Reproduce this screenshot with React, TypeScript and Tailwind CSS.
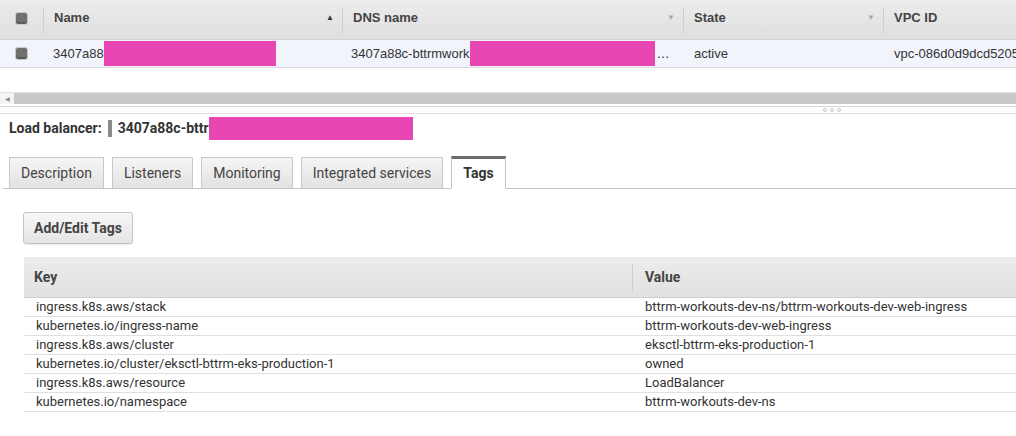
import { FC } from "react";

const tags: [string, string][] = [
  ["ingress.k8s.aws/stack", "bttrm-workouts-dev-ns/bttrm-workouts-dev-web-ingress"],
  ["kubernetes.io/ingress-name", "bttrm-workouts-dev-web-ingress"],
  ["ingress.k8s.aws/cluster", "eksctl-bttrm-eks-production-1"],
  ["kubernetes.io/cluster/eksctl-bttrm-eks-production-1", "owned"],
  ["ingress.k8s.aws/resource", "LoadBalancer"],
  ["kubernetes.io/namespace", "bttrm-workouts-dev-ns"],
];

const tabs = ["Description", "Listeners", "Monitoring", "Integrated services", "Tags"];

const Checkbox: FC = () => (
  <div className="w-[13px] h-[13px] rounded-[3px] bg-[#707070] border border-[#c8c8c8] shadow-[inset_0_-2px_0_#5a5a5a]" />
);

const HeadCell: FC<{ label: string; width: string; arrow?: "up" | "down" }> = ({ label, width, arrow }) => (
  <div className={`${width} h-full flex items-center shrink-0`}>
    <div className="w-px h-[26px] bg-[#cfcfcf]" />
    <span className="pl-[10px] pb-[3px] font-bold text-[13px] text-[#444]">{label}</span>
    <div className="flex-1" />
    {arrow === "up" && <span className="text-[8px] text-[#333] pr-[8px] pb-[3px]">▲</span>}
    {arrow === "down" && <span className="text-[8px] text-[#aaa] pr-[8px] pb-[3px]">▼</span>}
  </div>
);

const App: FC = () => {
  return (
    <div className="w-[1016px] h-[436px] bg-white overflow-hidden" style={{ fontFamily: "Roboto, 'Liberation Sans', sans-serif" }}>
      {/* Load balancer list */}
      <div className="font-['Liberation_Sans',Arial,sans-serif]">
        <div className="h-[40px] flex items-center bg-gradient-to-b from-[#ececec] to-[#dfdfdf] border-b border-[#d4d4d4]">
          <div className="w-[43px] shrink-0 flex justify-center pb-[3px]">
            <Checkbox />
          </div>
          <HeadCell label="Name" width="w-[299px]" arrow="up" />
          <HeadCell label="DNS name" width="w-[341px]" arrow="down" />
          <HeadCell label="State" width="w-[200px]" arrow="down" />
          <HeadCell label="VPC ID" width="w-[133px]" />
        </div>
        <div className="h-[28px] flex items-center bg-[#f1f4fb] border-b border-[#d8dbe2] text-[13px] text-[#333] whitespace-nowrap">
          <div className="w-[43px] shrink-0 flex justify-center">
            <Checkbox />
          </div>
          <div className="w-[299px] shrink-0 flex items-center pl-[10px]">
            <span>3407a88</span>
            <div className="w-[172px] h-[25px] bg-[#e846b3]" />
          </div>
          <div className="w-[341px] shrink-0 flex items-center pl-[9px]">
            <span>3407a88c-bttrmwork</span>
            <div className="w-[185px] h-[25px] bg-[#e846b3]" />
            <span className="pl-[2px]">…</span>
          </div>
          <div className="w-[200px] shrink-0 pl-[11px]">active</div>
          <div className="flex-1 pl-[11px]">vpc-086d0d9dcd5205</div>
        </div>
      </div>

      {/* Scrollbar */}
      <div className="mt-[24px] h-[12px] flex items-center bg-[#c9c9c9] border-t border-[#e2e2e2]">
        <div className="w-[14px] h-full bg-[#f4f4f4] flex items-center justify-center">
          <span className="text-[6px] text-[#888]">◀</span>
        </div>
        <div className="flex-1" />
      </div>
      <div className="h-px bg-[#d8d8d8] mt-[2px]" />
      <div className="relative h-[7px] border-b border-[#dcdcdc]">
        <div className="absolute left-[823px] top-[1px] flex gap-[3px]">
          <div className="w-[4px] h-[4px] rounded-full border border-[#c8c8c8]" />
          <div className="w-[4px] h-[4px] rounded-full border border-[#c8c8c8]" />
          <div className="w-[4px] h-[4px] rounded-full border border-[#c8c8c8]" />
        </div>
      </div>

      {/* Details */}
      <div className="h-[27px] mt-[1px] flex items-center pl-[9px] text-[14px] font-bold text-[#333] whitespace-nowrap">
        <span>Load balancer:</span>
        <div className="ml-[6px] w-[4px] h-[17px] bg-[#8a8a8a]" />
        <span className="ml-[6px]">3407a88c-bttr</span>
        <div className="w-[204px] h-[23px] bg-[#e846b3]" />
      </div>

      <div className="mt-[14px] ml-[3px] flex items-end gap-[8px] pl-[6px] h-[33px] border-b border-[#c4c4c4]">
        {tabs.map((t) => {
          const active = t === "Tags";
          return active ? (
            <div
              key={t}
              className="h-[33px] -mb-px px-[11px] flex items-center bg-white border border-[#c4c4c4] border-b-white border-t-[3px] border-t-[#6d6d6d] text-[14px] font-bold text-[#333]"
            >
              {t}
            </div>
          ) : (
            <div
              key={t}
              className="h-[31px] px-[11px] flex items-center bg-gradient-to-b from-[#f5f5f5] to-[#e2e2e2] border border-[#c8c8c8] border-b-0 text-[14px] text-[#444]"
            >
              {t}
            </div>
          );
        })}
      </div>

      <div className="pl-[23px] pt-[23px]">
        <button className="h-[32px] px-[10px] rounded-[3px] border border-[#c2c2c2] bg-gradient-to-b from-[#f7f7f7] to-[#e4e4e4] text-[14px] font-bold text-[#444] shadow-[0_1px_1px_rgba(0,0,0,0.08)]">
          Add/Edit Tags
        </button>
      </div>

      <div className="ml-[24px] mt-[13px] text-[13px] text-[#333]">
        <div className="h-[41px] flex items-center bg-gradient-to-b from-[#ececec] to-[#e1e1e1] border-b border-[#cfcfcf]">
          <div className="w-[608px] pl-[10px] text-[14px] font-bold text-[#444]">Key</div>
          <div className="w-px h-[27px] bg-[#cfcfcf]" />
          <div className="pl-[12px] text-[14px] font-bold text-[#444]">Value</div>
        </div>
        {tags.map(([k, v]) => (
          <div key={k} className="h-[19px] flex items-center border-b border-[#e0e0e0] whitespace-nowrap">
            <div className="w-[609px] pl-[12px]">{k}</div>
            <div className="pl-[12px]">{v}</div>
          </div>
        ))}
      </div>
    </div>
  );
};

export default App;
